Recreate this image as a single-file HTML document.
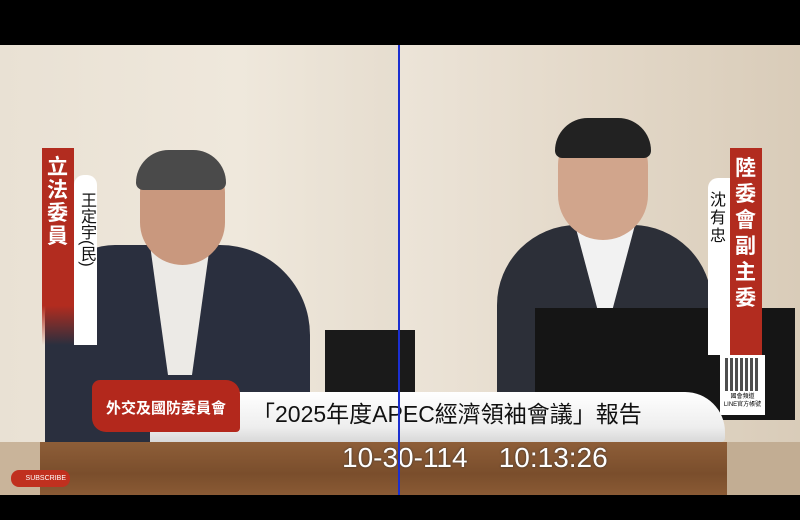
<!DOCTYPE html><html><head><meta charset="utf-8"><style>
body{margin:0;width:800px;height:520px;overflow:hidden;background:#000;position:relative;font-family:"Liberation Sans","Noto Sans CJK TC",sans-serif}
div{position:absolute}
.v{writing-mode:vertical-rl;white-space:nowrap}
</style></head><body>
<div style="left:0;top:45px;width:398px;height:450px;background:linear-gradient(90deg,#e9e1d4,#efe8dc 60%,#e6ddcf)"></div>
<div style="left:400px;top:45px;width:400px;height:450px;background:linear-gradient(90deg,#ece4d8,#e3d8c8 50%,#d9ccb9)"></div>
<div style="left:45px;top:245px;width:265px;height:200px;background:#2a2f3e;border-radius:70px 90px 0 0"></div>
<div style="left:150px;top:245px;width:60px;height:130px;background:#eceae6;clip-path:polygon(0 0,100% 0,70% 100%,30% 100%)"></div>
<div style="left:140px;top:155px;width:85px;height:110px;background:#c9987e;border-radius:40px 40px 45px 45px"></div>
<div style="left:136px;top:150px;width:90px;height:40px;background:#4a4a4a;border-radius:45px 45px 10px 10px"></div>
<div style="left:497px;top:225px;width:215px;height:220px;background:#2c2f38;border-radius:80px 80px 0 0"></div>
<div style="left:575px;top:225px;width:60px;height:90px;background:#f2f2f2;clip-path:polygon(0 0,100% 0,60% 100%,40% 100%)"></div>
<div style="left:558px;top:125px;width:90px;height:115px;background:#d1a58c;border-radius:40px 40px 45px 45px"></div>
<div style="left:555px;top:118px;width:96px;height:40px;background:#222;border-radius:45px 45px 10px 10px"></div>
<div style="left:325px;top:330px;width:90px;height:65px;background:#1a1a1a"></div>
<div style="left:535px;top:308px;width:260px;height:112px;background:#151515"></div>
<div style="left:40px;top:442px;width:687px;height:53px;background:linear-gradient(180deg,#8e5e38,#7a4e2c 60%,#8a5a34)"></div>
<div style="left:0;top:442px;width:40px;height:53px;background:#c9b49a"></div>
<div style="left:727px;top:442px;width:73px;height:53px;background:#c2ad93"></div>
<div style="left:42px;top:148px;width:32px;height:197px;background:linear-gradient(180deg,#b22c1f 80%,rgba(178,44,31,0))"></div>
<div style="left:47px;top:156px;width:24px;color:#fff;font-size:21px;line-height:23px;font-weight:bold">立法委員</div>
<div style="left:74px;top:175px;width:23px;height:170px;background:#fff;border-radius:10px 10px 0 0"></div>
<div class="v" style="left:76px;top:192px;color:#111;font-size:16px;line-height:20px">王定宇(民)</div>
<div style="left:730px;top:148px;width:32px;height:207px;background:#b22c1f"></div>
<div style="left:735px;top:156px;width:24px;color:#fff;font-size:21px;line-height:26px;font-weight:bold">陸委會副主委</div>
<div style="left:708px;top:178px;width:22px;height:177px;background:#fff;border-radius:10px 0 0 0"></div>
<div style="left:710px;top:192px;width:20px;color:#111;font-size:16px;line-height:18px">沈有忠</div>
<div style="left:720px;top:355px;width:45px;height:60px;background:#fff"></div>
<div style="left:725px;top:358px;width:35px;height:33px;background:repeating-linear-gradient(90deg,#222 0 3px,#fff 3px 5px),#222;opacity:.8"></div>
<div style="left:720px;top:393px;width:45px;text-align:center;font-size:6px;line-height:8px;color:#000">國會頻道<br>LINE官方帳號</div>
<div style="left:150px;top:392px;width:575px;height:50px;background:linear-gradient(180deg,#fff,#eee 70%,#d8d8d8);border-radius:0 40px 4px 0"></div>
<div style="left:92px;top:380px;width:148px;height:52px;background:#b3281c;border-radius:8px 14px 4px 14px"></div>
<div style="left:92px;top:397px;width:148px;text-align:center;color:#fff;font-size:15px;font-weight:bold;white-space:nowrap">外交及國防委員會</div>
<div style="left:252px;top:395px;color:#111;font-size:23px;white-space:nowrap">「2025年度APEC經濟領袖會議」報告</div>
<div style="left:342px;top:442px;color:#fff;font-size:28px;white-space:nowrap;text-shadow:0 0 2px #333;letter-spacing:0">10-30-114&nbsp;&nbsp;&nbsp; 10:13:26</div>
<div style="left:11px;top:470px;width:59px;height:17px;background:#c0301f;border-radius:8px;color:#fff;font-size:7px;line-height:17px;text-align:right;padding-right:4px;box-sizing:border-box">SUBSCRIBE</div>
<div style="left:398px;top:45px;width:2px;height:450px;background:#1b2fd0"></div>
</body></html>
